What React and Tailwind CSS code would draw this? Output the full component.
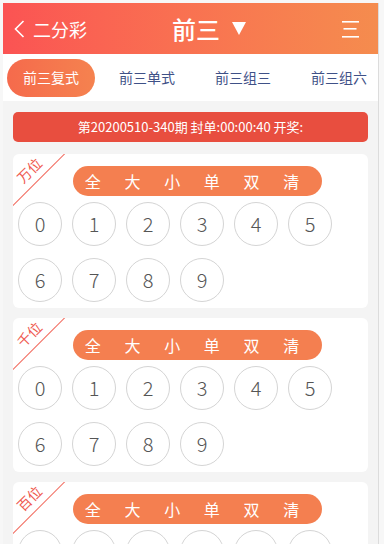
import { useState } from "react";

const TABS = ["前三复式", "前三单式", "前三组三", "前三组六"];
const QUICK = ["全", "大", "小", "单", "双", "清"];
const DIGITS = [0, 1, 2, 3, 4, 5, 6, 7, 8, 9];
const ROWS = ["万位", "千位", "百位"];

const font = { fontFamily: '"Noto Sans CJK SC", "Noto Sans", sans-serif' };

export default function App() {
  const [tab, setTab] = useState(0);
  const [picked, setPicked] = useState({});

  const toggle = (row, n) => {
    const key = `${row}-${n}`;
    setPicked({ ...picked, [key]: !picked[key] });
  };

  return (
    <div className="w-[384px] h-[544px] overflow-hidden bg-[#f7f7f7] pt-[3px] pl-[3px]" style={font}>
      <div className="w-[376px] min-h-full bg-[#f4f4f4] border-r border-[#dcdcdc]">
        {/* header */}
        <div className="h-[51px] flex items-center pl-[11px] pr-[18px] bg-gradient-to-r from-[#fb5353] to-[#f58c4e] text-white">
          <div className="flex items-center gap-[8px] w-[158px] shrink-0">
            <svg width="11" height="18" viewBox="0 0 11 18" fill="none">
              <path d="M9.5 1 L1.5 9 L9.5 17" stroke="white" strokeWidth="1.6" />
            </svg>
            <span className="text-[18px] leading-none">二分彩</span>
          </div>
          <div className="flex items-center gap-[12px]">
            <span className="text-[24px] leading-none font-medium">前三</span>
            <svg width="14" height="13" viewBox="0 0 14 13">
              <path d="M0 0 H14 L7 13 Z" fill="white" />
            </svg>
          </div>
          <div className="flex-1 flex justify-end">
            <svg width="18" height="18" viewBox="0 0 18 18">
              <rect x="0" y="1" width="17" height="1.6" fill="white" />
              <rect x="1.5" y="8" width="13" height="1.6" fill="white" />
              <rect x="0" y="16" width="17" height="1.6" fill="white" />
            </svg>
          </div>
        </div>

        {/* tabs */}
        <div className="h-[47px] bg-white flex items-center pl-[4px] overflow-hidden">
          {TABS.map((t, i) => (
            <button
              key={t}
              onClick={() => setTab(i)}
              className={
                i === tab
                  ? "shrink-0 w-[88px] h-[38px] rounded-full bg-gradient-to-r from-[#f56a4c] to-[#f5824f] text-white text-[14px] mr-[8px]"
                  : "shrink-0 w-[88px] h-[38px] text-[14px] text-[#3f5187] mr-[8px]"
              }
            >
              {t}
            </button>
          ))}
        </div>

        <div className="px-[10px] pt-[11px] flex flex-col gap-[10px]">
          {/* countdown bar */}
          <div className="h-[30px] mb-[2px] rounded-[5px] bg-[#e84e3f] text-white text-[13px] flex items-center justify-center">
            第20200510-340期 封单:00:00:40 开奖:
          </div>

          {ROWS.map((label) => (
            <div key={label} className="relative bg-white rounded-[6px] pt-[12px] pb-[6px] overflow-hidden shrink-0">
              {/* corner label */}
              <div className="absolute left-0 top-0 w-[52px] h-[52px] pointer-events-none">
                <div className="absolute left-[-11px] top-[25px] w-[74px] h-[1px] bg-[#f26a5e] -rotate-45" />
                <span className="absolute left-[2px] top-[9px] text-[14px] leading-none text-[#ef5a50] -rotate-45">
                  {label}
                </span>
              </div>

              <div className="ml-[60px] w-[249px] h-[30px] rounded-full bg-[#f47f50] grid grid-cols-6 items-center pr-[11px] text-white text-[16px] text-center">
                {QUICK.map((q) => (
                  <span key={q}>{q}</span>
                ))}
              </div>

              <div className="mt-[6px] pl-[5px] flex flex-wrap gap-x-[10px] gap-y-[12px] w-[340px]">
                {DIGITS.map((n) => {
                  const on = picked[`${label}-${n}`];
                  return (
                    <button
                      key={n}
                      onClick={() => toggle(label, n)}
                      className={
                        on
                          ? "w-[44px] h-[44px] rounded-full border border-[#f47f50] bg-[#f47f50] text-white text-[20px] font-light flex items-center justify-center"
                          : "w-[44px] h-[44px] rounded-full border border-[#d4d4d4] text-[#555] text-[20px] font-light flex items-center justify-center"
                      }
                    >
                      {n}
                    </button>
                  );
                })}
              </div>
            </div>
          ))}
        </div>
      </div>
    </div>
  );
}
